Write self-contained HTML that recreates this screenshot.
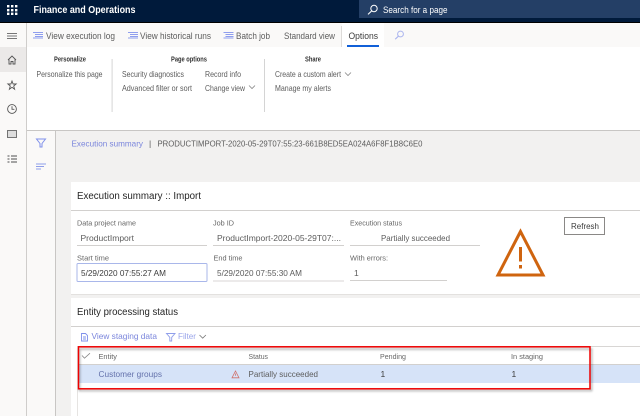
<!DOCTYPE html>
<html><head><meta charset="utf-8"><title>Finance and Operations</title>
<style>
html,body{margin:0;padding:0;width:640px;height:416px;overflow:hidden;background:#fff}
svg{display:block}
text{font-family:"Liberation Sans",sans-serif;font-size:8.5px;fill:#5c5c5c;white-space:pre;filter:blur(.25px)}
.b{font-weight:bold;font-size:7px;fill:#333}
.d{fill:#3c3c3c}
.h{font-size:10px;fill:#252525}
.l{fill:#7b86dc}
.s{font-size:7.500px;fill:#666}
</style></head><body>
<svg width="640" height="416" viewBox="0 0 640 416" xmlns="http://www.w3.org/2000/svg">
<defs><filter id="sh" x="-5%" y="-20%" width="110%" height="140%"><feGaussianBlur stdDeviation="1"/></filter></defs>
<!-- backgrounds -->
<rect width="640" height="416" fill="#fff"/>
<rect y="0" width="640" height="22" fill="#001a3b"/>
<rect y="22" width="640" height="1" fill="#000"/>
<rect x="359" y="0" width="281" height="18" fill="#243f66"/>
<rect y="23" width="640" height="24" fill="#faf9f8"/>
<rect x="0" y="47" width="26" height="369" fill="#faf9f8"/>
<rect x="0" y="47" width="26" height="25" fill="#ebe9e8"/>
<rect x="26" y="23" width="1" height="393" fill="#cfcdcb"/>
<rect x="27" y="130" width="613" height="1" fill="#c8c6c4"/>
<rect x="27" y="131" width="28" height="285" fill="#faf9f8"/>
<rect x="55" y="131" width="1" height="285" fill="#c8c6c4"/>
<rect x="56" y="131" width="584" height="285" fill="#f2f1f0"/>
<rect x="71" y="182" width="569" height="112" fill="#fff"/>
<rect x="71" y="210" width="569" height="1" fill="#d2d0ce"/>
<rect x="71" y="298" width="569" height="118" fill="#fff"/>
<rect x="71" y="326" width="569" height="1" fill="#d2d0ce"/>
<rect x="71" y="294" width="569" height="1" fill="#e3e1df"/>
<!-- top bar -->
<g fill="#fff">
<rect x="7" y="5" width="2.4" height="2.4"/><rect x="11" y="5" width="2.4" height="2.4"/><rect x="15" y="5" width="2.4" height="2.4"/>
<rect x="7" y="9" width="2.4" height="2.4"/><rect x="11" y="9" width="2.4" height="2.4"/><rect x="15" y="9" width="2.4" height="2.4"/>
<rect x="7" y="12.6" width="2.4" height="2.4"/><rect x="11" y="12.6" width="2.4" height="2.4"/><rect x="15" y="12.6" width="2.4" height="2.4"/>
</g>
<text x="33.5" y="13" textLength="102" lengthAdjust="spacingAndGlyphs" style="font-size:10px;font-weight:bold;fill:#fff">Finance and Operations</text>
<circle cx="374" cy="8.5" r="3.2" fill="none" stroke="#fff" stroke-width="1"/>
<path d="M371.6 11l-3.6 3.4" stroke="#fff" stroke-width="1.1" fill="none"/>
<text x="383" y="13" textLength="64.5" lengthAdjust="spacingAndGlyphs" style="font-size:9px;fill:#fff">Search for a page</text>
<!-- toolbar -->
<g stroke="#8f9eee" stroke-width="1">
<path d="M33 32.5h10M35 34.5h8M35 36.5h8M33 38h10"/>
<path d="M128 32.5h10M130 34.5h8M130 36.5h8M128 38h10"/>
<path d="M223.5 32.5h10M225.5 34.5h8M225.5 36.5h8M223.5 38h10"/>
</g>
<text x="46" y="39" textLength="69" lengthAdjust="spacingAndGlyphs" style="font-size:9px">View execution log</text>
<text x="140" y="39" textLength="71" lengthAdjust="spacingAndGlyphs" style="font-size:9px">View historical runs</text>
<text x="236" y="39" textLength="34" lengthAdjust="spacingAndGlyphs" style="font-size:9px">Batch job</text>
<text x="284" y="39" textLength="51" lengthAdjust="spacingAndGlyphs" style="font-size:9px">Standard view</text>
<rect x="341" y="26" width="1" height="21" fill="#dddbd9"/>
<rect x="342" y="23" width="42" height="24" fill="#fff"/>
<rect x="347" y="45" width="32" height="2" fill="#1160d8"/>
<text x="348.5" y="39" textLength="29.5" lengthAdjust="spacingAndGlyphs" class="d" style="font-size:9px">Options</text>
<circle cx="400.5" cy="34" r="2.9" fill="none" stroke="#aab4ee" stroke-width="1"/>
<path d="M398.4 36.2l-3.2 3" stroke="#aab4ee" stroke-width="1.1"/>
<!-- ribbon -->
<text x="54" y="61.5" textLength="32" lengthAdjust="spacingAndGlyphs" class="b">Personalize</text>
<text x="171" y="61.5" textLength="36" lengthAdjust="spacingAndGlyphs" class="b">Page options</text>
<text x="305" y="61.5" textLength="16" lengthAdjust="spacingAndGlyphs" class="b">Share</text>
<text x="36.5" y="77" textLength="66" lengthAdjust="spacingAndGlyphs">Personalize this page</text>
<text x="122" y="77" textLength="62" lengthAdjust="spacingAndGlyphs">Security diagnostics</text>
<text x="122" y="91" textLength="70" lengthAdjust="spacingAndGlyphs">Advanced filter or sort</text>
<text x="205" y="77" textLength="36" lengthAdjust="spacingAndGlyphs">Record info</text>
<text x="205" y="91" textLength="40" lengthAdjust="spacingAndGlyphs">Change view</text>
<text x="275" y="77" textLength="66" lengthAdjust="spacingAndGlyphs">Create a custom alert</text>
<text x="275" y="91" textLength="56" lengthAdjust="spacingAndGlyphs">Manage my alerts</text>
<path d="M249 85.5l3 3 3-3M345 72.5l3 3 3-3" fill="none" stroke="#888" stroke-width=".8"/>
<rect x="111.5" y="59" width="1.2" height="53" fill="#dcdcdc"/>
<rect x="264" y="59" width="1" height="53" fill="#d4d4d4"/>
<!-- left nav -->
<path d="M7 33.5h10M7 36h10M7 38.5h10" stroke="#777" stroke-width=".9"/>
<path d="M8 60l4-4 4 4M9 59.5V64h2v-2.5h2V64h2v-4.5" fill="none" stroke="#555" stroke-width=".9"/>
<path d="M12 81l1.1 3h3l-2.4 2 .9 3.2-2.6-1.9-2.6 1.9.9-3.2-2.4-2h3z" fill="none" stroke="#555" stroke-width=".9"/>
<circle cx="12" cy="109" r="4.4" fill="none" stroke="#555" stroke-width=".9"/>
<path d="M12 106.3V109.3h2.4" fill="none" stroke="#555" stroke-width=".9"/>
<rect x="7.5" y="130.5" width="9" height="7" fill="#ddd" stroke="#666" stroke-width=".9"/>
<path d="M7.5 156h2M11 156h6M7.5 159h2M11 159h6M7.5 162h2M11 162h6" stroke="#888" stroke-width="1.4"/>
<!-- filter pane -->
<path d="M36.5 139h9l-3.5 4.5v3.500h-2v-3.500z" fill="none" stroke="#7f90ea" stroke-width="1"/>
<path d="M36 164h10M36 166.500h8M36 169h5" stroke="#8f9eea" stroke-width="1"/>
<!-- breadcrumb -->
<text x="71.5" y="146.500" textLength="71.5" lengthAdjust="spacingAndGlyphs" class="l">Execution summary</text>
<text x="149" y="146.500">|</text>
<text x="157.5" y="146.500" textLength="265" lengthAdjust="spacingAndGlyphs">PRODUCTIMPORT-2020-05-29T07:55:23-661B8ED5EA024A6F8F1B8C6E0</text>
<!-- card 1 -->
<text x="77" y="199" textLength="124" lengthAdjust="spacingAndGlyphs" class="h">Execution summary :: Import</text>
<text x="77" y="225.500" textLength="59" lengthAdjust="spacingAndGlyphs" class="s">Data project name</text>
<text x="213" y="225.500" textLength="21" lengthAdjust="spacingAndGlyphs" class="s">Job ID</text>
<text x="350" y="225.500" textLength="52" lengthAdjust="spacingAndGlyphs" class="s">Execution status</text>
<text x="80.500" y="241" textLength="53.500" lengthAdjust="spacingAndGlyphs">ProductImport</text>
<text x="217" y="241" textLength="124" lengthAdjust="spacingAndGlyphs">ProductImport-2020-05-29T07:...</text>
<text x="381" y="241" textLength="69" lengthAdjust="spacingAndGlyphs">Partially succeeded</text>
<rect x="77" y="245" width="130" height="1" fill="#d2d0ce"/>
<rect x="213" y="245" width="131" height="1" fill="#d2d0ce"/>
<rect x="350" y="245" width="130" height="1" fill="#d2d0ce"/>
<text x="77" y="260.500" textLength="32" lengthAdjust="spacingAndGlyphs" class="s">Start time</text>
<text x="213.500" y="260.500" textLength="29" lengthAdjust="spacingAndGlyphs" class="s">End time</text>
<text x="350" y="260.500" textLength="38" lengthAdjust="spacingAndGlyphs" class="s">With errors:</text>
<rect x="77" y="263.500" width="130" height="18" rx="1" fill="#fff" stroke="#a9b7ea" stroke-width="1"/>
<text x="81" y="276" textLength="85" lengthAdjust="spacingAndGlyphs" class="d">5/29/2020 07:55:27 AM</text>
<text x="217" y="276" textLength="85" lengthAdjust="spacingAndGlyphs">5/29/2020 07:55:30 AM</text>
<rect x="213" y="280" width="131" height="2" fill="#eceaea"/>
<text x="354" y="276">1</text>
<rect x="350" y="280" width="97" height="1" fill="#d2d0ce"/>
<rect x="564.500" y="217.500" width="40" height="17" fill="#fff" stroke="#8a8886" stroke-width="1"/>
<text x="571" y="229" textLength="28" lengthAdjust="spacingAndGlyphs" class="d">Refresh</text>
<path d="M520.500 231.500L498 275H543Z" fill="none" stroke="#cf640f" stroke-width="3"/>
<rect x="519" y="247" width="3" height="14.500" fill="#cf640f"/>
<rect x="519" y="265" width="3" height="3.500" fill="#cf640f"/>
<!-- card 2 -->
<text x="77" y="315" textLength="101" lengthAdjust="spacingAndGlyphs" class="h">Entity processing status</text>
<path d="M81.500 333.500h4l2 2v5.500h-6zM83 337h3M83 339h3" fill="none" stroke="#7f90ea" stroke-width=".9"/>
<text x="91.500" y="339" textLength="65.500" lengthAdjust="spacingAndGlyphs" class="l">View staging data</text>
<path d="M166.500 333.500h8.500l-3.300 3.800v3.700h-1.900v-3.700z" fill="none" stroke="#8f9eea" stroke-width=".9"/>
<text x="178" y="339" textLength="18" lengthAdjust="spacingAndGlyphs" style="fill:#9aa5ea">Filter</text>
<path d="M199.500 335l3.200 3.200 3.200-3.200" fill="none" stroke="#777" stroke-width=".8"/>
<rect x="77" y="346" width="563" height="1" fill="#d8d6d4"/>
<rect x="77" y="346" width="1" height="70" fill="#e6e4e2"/>
<rect x="78" y="364" width="562" height="1" fill="#d2d0ce"/>
<rect x="78" y="365" width="562" height="18" fill="#d6e3f8"/>
<path d="M82 355.500l2.500 2.700 5.500-5" fill="none" stroke="#888" stroke-width=".8"/>
<text x="98.500" y="359" textLength="18.500" lengthAdjust="spacingAndGlyphs" class="s">Entity</text>
<text x="248.500" y="359" textLength="19.500" lengthAdjust="spacingAndGlyphs" class="s">Status</text>
<text x="380" y="359" textLength="26" lengthAdjust="spacingAndGlyphs" class="s">Pending</text>
<text x="511" y="359" textLength="32" lengthAdjust="spacingAndGlyphs" class="s">In staging</text>
<text x="98.500" y="377" textLength="63.500" lengthAdjust="spacingAndGlyphs" style="fill:#6472ac">Customer groups</text>
<path d="M235.500 371l3.500 6.800h-7zM235.500 373.500v2.300" fill="none" stroke="#d0706a" stroke-width=".8"/>
<text x="248.500" y="377" textLength="69.500" lengthAdjust="spacingAndGlyphs">Partially succeeded</text>
<text x="380.500" y="377" class="d">1</text>
<text x="511.500" y="377" class="d">1</text>
<!-- red highlight -->
<rect x="79.500" y="349" width="512" height="41.500" fill="none" stroke="#000" stroke-opacity=".35" stroke-width="1.500" filter="url(#sh)"/>
<rect x="78.500" y="346.800" width="511.500" height="42" fill="none" stroke="#f00000" stroke-width="1.500"/>
</svg>
</body></html>
